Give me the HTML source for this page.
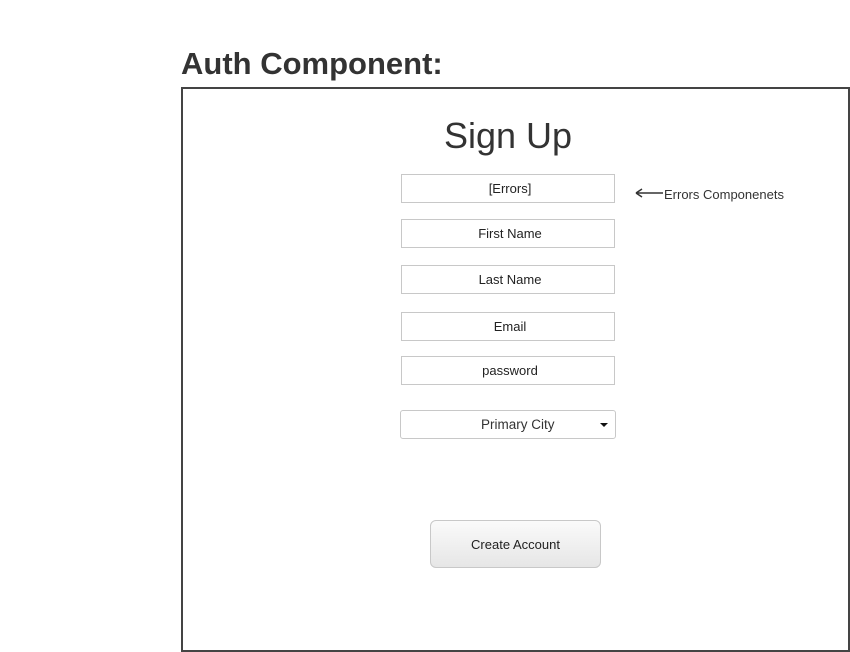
<!DOCTYPE html>
<html><head><meta charset="utf-8"><style>
body{margin:0;width:850px;height:652px;background:#fff;position:relative;overflow:hidden;font-family:"Liberation Sans",Arial,sans-serif;}
h1{position:absolute;left:181px;top:44px;margin:0;font-size:31px;font-weight:bold;color:#333;line-height:40px;}
.box{position:absolute;left:181px;top:87px;width:665px;height:561px;border:2px solid #444;}
.title{position:absolute;left:408px;width:200px;top:114px;text-align:center;font-size:36px;color:#333;line-height:44px;}
.in{position:absolute;left:401px;width:208px;padding-left:4px;height:27px;border:1px solid #c8c8c8;text-align:center;font-size:13px;line-height:27px;color:#222;}
.sel{position:absolute;left:400px;top:410px;width:214px;height:27px;border:1px solid #c8c8c8;border-radius:3px;font-size:13.5px;line-height:28px;color:#333;}
.sel span{position:absolute;left:80px;}
.sel i{position:absolute;right:7px;top:12px;width:0;height:0;border-left:4px solid transparent;border-right:4px solid transparent;border-top:4px solid #111;}
.btn{position:absolute;left:430px;top:520px;width:169px;height:46px;border:1px solid #c8c8c8;border-radius:6px;background:linear-gradient(#fafafa,#e6e6e6);text-align:center;line-height:47px;font-size:13px;color:#222;}
.note{position:absolute;left:664px;top:186px;font-size:13px;color:#333;line-height:17px;}
</style></head><body>
<h1>Auth Component:</h1>
<div class="box"></div>
<div class="title">Sign Up</div>
<div class="in" style="top:174px">[Errors]</div>
<div class="in" style="top:219px">First Name</div>
<div class="in" style="top:265px">Last Name</div>
<div class="in" style="top:312px">Email</div>
<div class="in" style="top:356px">password</div>
<div class="sel"><span>Primary City</span><i></i></div>
<div class="btn">Create Account</div>
<svg style="position:absolute;left:634px;top:187px" width="30" height="12"><path d="M2 6H29M2 6L8 2M2 6L8 10" stroke="#333" stroke-width="1.5" fill="none"/></svg>
<div class="note">Errors Componenets</div>
</body></html>
